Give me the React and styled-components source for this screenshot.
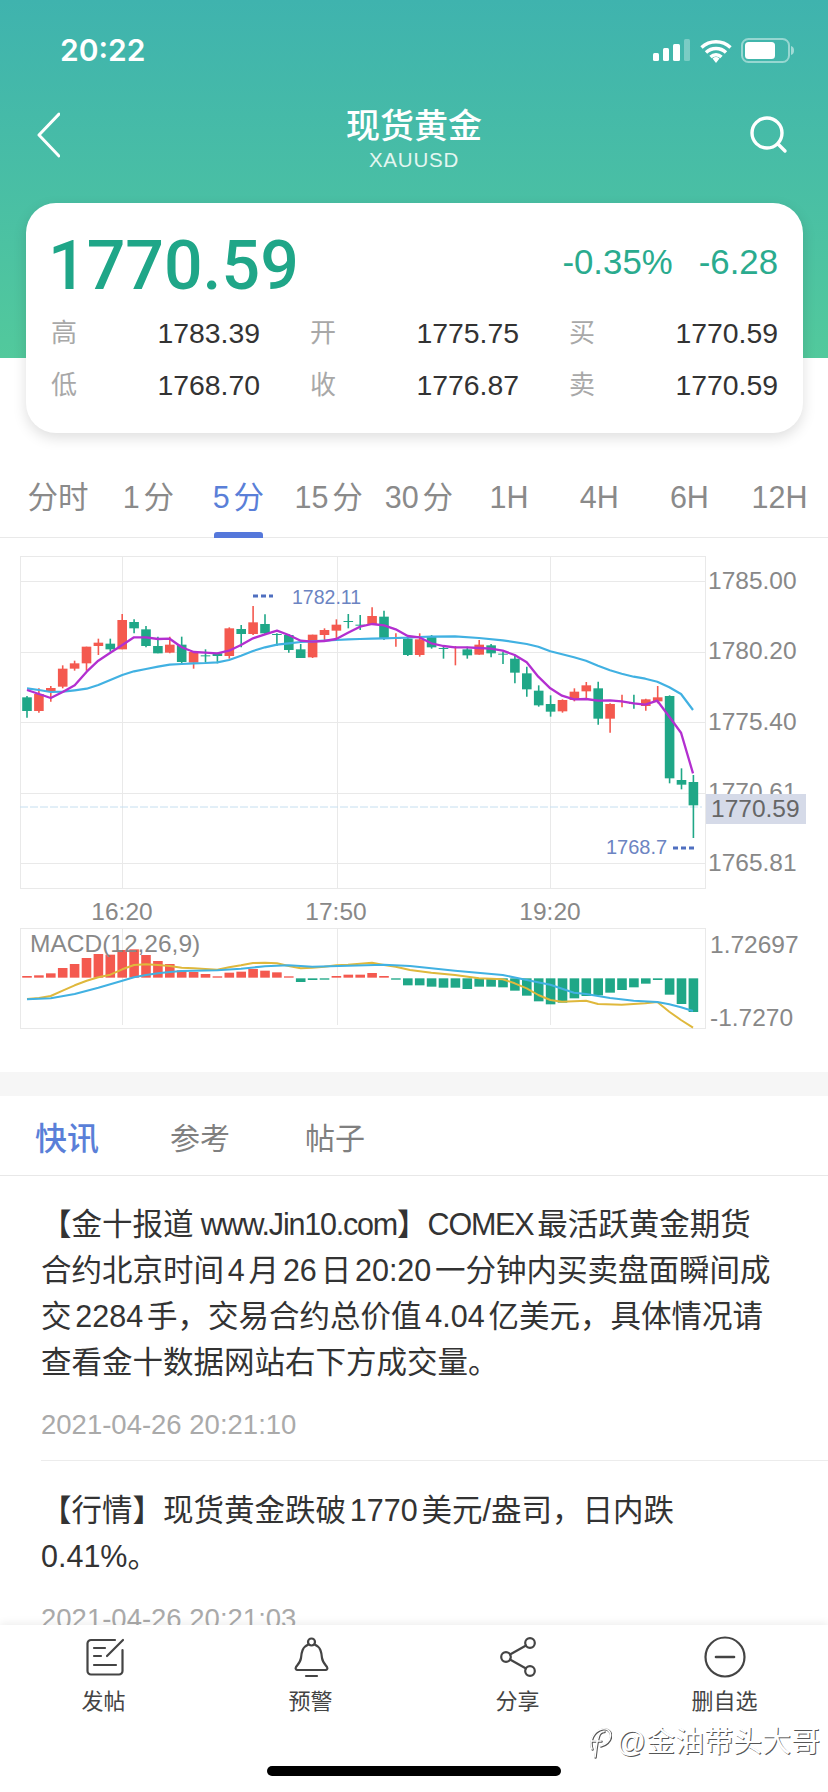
import React from "react";
import styled, { createGlobalStyle } from "styled-components";

const FONT = `"Liberation Sans", "Noto Sans CJK SC", sans-serif`;
const GREEN = "#1fa787";
const RED = "#f4594f";

const Global = createGlobalStyle`
  html, body { margin: 0; padding: 0; background: #fff; }
  body { font-family: ${FONT}; }
`;

const Page = styled.div`
  width: 828px;
  height: 1792px;
  display: flex;
  flex-direction: column;
  overflow: hidden;
  background: #fff;
`;
const Hero = styled.header`
  background: linear-gradient(180deg, #3fb3ae 0%, #52c99c 100%) no-repeat;
  background-size: 100% 358px;
`;
const StatusBar = styled.div`
  height: 100px;
  display: flex;
  align-items: center;
  justify-content: space-between;
  padding: 0 34px 0 60px;
`;
const Clock = styled.span`
  font-family: Inter, ${FONT};
  font-size: 30px;
  font-weight: 600;
  color: #fff;
`;
const NavBar = styled.nav`
  height: 103px;
  display: grid;
  grid-template-columns: 1fr auto 1fr;
  align-items: start;
  padding-top: 4px;
  box-sizing: border-box;
`;
const BackIcon = styled.svg`
  width: 30px;
  height: 50px;
  margin: 6px 0 0 30px;
`;
const SearchIcon = styled.svg`
  width: 44px;
  height: 44px;
  margin: 7px 39px 0 0;
  justify-self: end;
`;
const TitleBlock = styled.div`
  text-align: center;
  color: #fff;
`;
const Title = styled.div`
  font-family: "Noto Sans CJK SC", sans-serif;
  font-size: 34px;
  font-weight: 500;
  line-height: 40px;
`;
const Subtitle = styled.div`
  font-size: 20.5px;
  line-height: 26px;
  margin-top: 3px;
  letter-spacing: 0.8px;
  color: #e4f6f1;
`;
const QuoteCard = styled.section`
  margin: 0 25px 0 26px;
  height: 230px;
  box-sizing: border-box;
  padding: 30px 25px 0;
  background: #fff;
  border-radius: 30px;
  box-shadow: 0 5px 14px rgba(0, 0, 0, 0.13);
`;
const PriceRow = styled.div`
  height: 74px;
  display: flex;
  justify-content: space-between;
  align-items: flex-start;
`;
const Price = styled.div`
  font-family: Roboto, ${FONT};
  font-size: 68px;
  font-weight: 500;
  line-height: 66px;
  color: #1fa688;
  margin-left: -3px;
`;
const Change = styled.div`
  display: flex;
  gap: 26px;
  font-size: 34.8px;
  line-height: 58px;
  color: #2aab8e;
`;
const Stats = styled.div`
  display: grid;
  grid-template-columns: repeat(3, 209px);
  column-gap: 50px;
`;
const Stat = styled.div`
  height: 52px;
  display: flex;
  align-items: center;
  justify-content: space-between;
`;
const StatLabel = styled.span`
  font-size: 26px;
  padding-bottom: 6px;
  color: #a8a8a8;
`;
const StatValue = styled.span`
  font-size: 28.4px;
  color: #333;
`;
const PeriodTabs = styled.div`
  margin-top: 30px;
  height: 75px;
  box-sizing: border-box;
  padding-left: 13px;
  display: flex;
  border-bottom: 1px solid #e9e9e9;
`;
const Period = styled.div`
  position: relative;
  width: 90.2px;
  flex: none;
  text-align: center;
  font-size: 30.5px;
  line-height: 68px;
  white-space: nowrap;
  text-autospace: normal;
  color: ${(p) => (p.$active ? "#5a7fd8" : "#8a8a8a")};
  &::after {
    content: "";
    display: ${(p) => (p.$active ? "block" : "none")};
    position: absolute;
    left: 21px;
    right: 21px;
    bottom: -1px;
    height: 6px;
    border-radius: 3px 3px 0 0;
    background: #5578db;
  }
`;
const ChartSvg = styled.svg`
  display: block;
  width: 828px;
  height: 534px;
  flex: none;
`;
const AxisText = styled.text`
  font-family: ${FONT};
  font-size: ${(p) => p.$size || 24.5}px;
  fill: ${(p) => p.$fill || "#888"};
  dominant-baseline: central;
  text-anchor: ${(p) => p.$anchor || "start"};
`;
const Band = styled.div`
  height: 24px;
  flex: none;
  background: #f6f6f6;
`;
const NewsTabs = styled.div`
  height: 80px;
  flex: none;
  box-sizing: border-box;
  display: flex;
  align-items: center;
  padding-left: 35px;
  gap: 75px;
  border-bottom: 1px solid #e8e8e8;
`;
const NewsTab = styled.span`
  font-size: ${(p) => (p.$active ? 32 : 30)}px;
  margin-right: ${(p) => (p.$active ? -4 : 0)}px;
  font-weight: ${(p) => (p.$active ? 500 : 400)};
  color: ${(p) => (p.$active ? "#5a7fd8" : "#808080")};
  font-family: "Noto Sans CJK SC", sans-serif;
`;
const NewsList = styled.div`
  flex: 1;
  min-height: 0;
  overflow: hidden;
`;
const NewsItem = styled.article`
  margin-left: 41px;
  padding: ${(p) => (p.$first ? "25px" : "26px")} 0 20px;
  border-bottom: 1px solid #ececec;
`;
const NewsText = styled.p`
  margin: 0;
  font-size: 30.5px;
  line-height: 46px;
  color: #333;
  text-autospace: normal;
  white-space: nowrap;
`;
const LatinRun = styled.span`
  letter-spacing: -1.2px;
`;
const NewsDate = styled.div`
  margin-top: 25px;
  font-size: 27.5px;
  line-height: 30px;
  color: #aaa;
`;
const BottomBar = styled.footer`
  position: relative;
  height: 167px;
  flex: none;
  box-sizing: border-box;
  padding-top: 10px;
  display: flex;
  flex-direction: column;
  background: #fff;
  box-shadow: 0 -2px 8px rgba(0, 0, 0, 0.07);
`;
const Actions = styled.div`
  display: grid;
  grid-template-columns: repeat(4, 207px);
`;
const Action = styled.div`
  display: flex;
  flex-direction: column;
  align-items: center;
  gap: 8px;
`;
const ActionLabel = styled.span`
  font-size: 22px;
  line-height: 30px;
  color: #444;
`;
const HomeIndicator = styled.div`
  width: 294px;
  height: 10px;
  border-radius: 5px;
  background: #000;
  margin: auto auto 16px;
`;
const Watermark = styled.div`
  position: absolute;
  right: 8px;
  top: 99px;
  display: flex;
  align-items: center;
  gap: 5px;
  font-size: 29px;
  line-height: 36px;
  color: #fff;
  text-shadow: 1px 1px 0 #555;
`;

// reference coordinates measured on 3x crops: [x, wickTop, wickBottom, bodyTop, bodyBottom, up]
const c2 = (i) => 81 + 35.7 * i;
const candles = [
  [0,468,533,472,513,0],[1,445,518,462,513,1],[2,438,485,444,455,1],[3,376,445,386,440,1],
  [4,362,392,370,386,1],[5,320,392,320,370,1],[6,296,345,308,318,1],[7,296,335,311,328,0],
  [8,222,328,240,328,1],[9,238,280,246,265,0],[10,258,322,268,318,0],[11,290,340,318,340,0],
  [12,290,340,314,338,1],[13,290,370,314,366,0],[14,334,386,336,368,1],[15,328,368,346,348,0],
  [16,338,370,340,348,0],[17,262,356,265,348,1],[18,255,322,267,282,0],[19,198,285,247,282,1],
  [20,223,285,252,280,0],[21,280,318,282,284,0],[22,282,338,285,330,0],[23,312,354,328,354,0],
  [24,284,354,284,352,1],[25,265,300,270,285,1],[26,238,295,254,272,1],[27,222,265,243,245,0],
  [28,225,270,254,256,0],[29,202,255,228,255,1],[30,212,300,230,296,0],[31,280,320,294,296,1],
  [32,292,348,296,345,0],[33,280,350,298,345,1],[34,285,326,290,322,0],[35,318,356,324,326,0],
  [36,318,376,321,323,1],[37,320,356,328,346,0],[38,300,344,314,344,1],[39,312,352,316,340,0],
  [40,335,372,341,343,0],[41,345,430,356,398,0],[42,380,470,400,448,0],[43,436,500,452,496,0],
  [44,466,530,492,515,0],[45,478,518,480,514,1],[46,445,484,455,480,1],[47,426,474,436,454,1],
  [48,425,554,445,536,0],[49,490,578,492,536,1],[50,464,502,483,485,1],[51,464,506,489,491,0],
  [52,476,512,478,498,1],[53,438,490,472,484,1],[54,466,730,468,715,0],[55,685,748,720,734,0],
  [56,705,894,726,796,0],
];
const macdBars = [
  1308,1306,1300,1284,1272,1254,1242,1244,1230,1228,1245,1263,1272,1291,1296,1302,1309,1298,1295,1287,1292,1297,1309,
  1326,1320,1319,1308,1304,1304,1299,1308,1319,1336,1336,
  1340,1343,1343,1347,1340,1340,1342,1352,1367,1384,1393,1388,1375,1368,1366,1358,1350,1342,1331,1320,1364,1392,1416,
];
const z3 = (x) => x + 1230;
const purple = [[81,450],[117,462],[152,474],[188,456],[224,436],[260,395],[295,362],[331,338],[367,315],[402,292],[438,292],[474,297],[509,296],[545,322],[581,336],[616,338],[652,340],[687,332],[723,315],[759,295],[795,283],[831,272],[866,285],[902,302],[937,305],[973,303],[1009,297],[1044,278],[1080,260],[1116,252],[1152,256],[1187,268],[1223,288],[1258,292],[z3(64),310],[z3(100),318],[z3(135),322],[z3(171),322],[z3(207),324],[z3(242),326],[z3(278),332],[z3(314),345],[z3(350),367],[z3(385),410],[z3(421),445],[z3(456),467],[z3(492),478],[z3(528),477],[z3(564),482],[z3(600),481],[z3(635),484],[z3(671),490],[z3(706),494],[z3(742),482],[z3(778),530],[z3(813),578],[z3(849),700]];
const blue = [[81,445],[117,450],[152,456],[188,455],[224,451],[260,446],[295,435],[331,420],[367,405],[402,394],[438,387],[474,380],[509,374],[545,372],[581,370],[616,369],[652,367],[687,360],[723,347],[759,333],[795,322],[831,314],[866,310],[902,306],[937,304],[973,302],[1009,300],[1044,298],[1080,297],[1116,296],[1152,295],[1187,294],[1223,293],[1258,291],[z3(64),290],[z3(135),289],[z3(207),294],[z3(278),301],[z3(350),312],[z3(385),320],[z3(421),334],[z3(492),352],[z3(528),362],[z3(564),377],[z3(600),391],[z3(635),401],[z3(671),410],[z3(706),416],[z3(742),425],[z3(778),442],[z3(813),462],[z3(849),510]];
const macdYellow = [[81,1377],[117,1374],[152,1368],[188,1352],[224,1336],[260,1322],[295,1312],[331,1304],[367,1288],[402,1275],[438,1273],[474,1275],[509,1278],[545,1283],[581,1285],[616,1287],[652,1289],[687,1282],[723,1276],[759,1269],[795,1268],[831,1270],[866,1278],[902,1285],[937,1283],[973,1280],[1009,1276],[1044,1274],[1080,1271],[1116,1268],[1152,1275],[1187,1280],[z3(0),1290],[z3(64),1298],[z3(135),1305],[z3(207),1315],[z3(278),1318],[z3(314),1330],[z3(350),1345],[z3(385),1365],[z3(421),1380],[z3(456),1385],[z3(528),1382],[z3(564),1392],[z3(635),1394],[z3(706),1390],[z3(742),1386],[z3(778),1415],[z3(813),1440],[z3(849),1463]];
const macdBlue = [[81,1378],[152,1375],[224,1362],[295,1343],[367,1322],[402,1312],[438,1305],[474,1300],[509,1296],[545,1293],[652,1291],[723,1286],[795,1279],[866,1276],[937,1280],[1044,1277],[1152,1274],[z3(0),1278],[z3(135),1292],[z3(278),1305],[z3(350),1320],[z3(421),1334],[z3(492),1358],[z3(528),1362],[z3(600),1374],[z3(671),1382],[z3(742),1386],[z3(778),1393],[z3(813),1402],[z3(849),1413]];

const X = (z) => z / 3;
const Y = (z) => 540 + z / 3;
const pts = (arr) => arr.map(([x, y]) => `${X(x).toFixed(1)},${Y(y).toFixed(1)}`).join(" ");

const GRID = "#e9e9e9";

function Chart() {
  return (
    <ChartSvg viewBox="0 538 828 534">
      <g stroke={GRID} strokeWidth="1" fill="none">
        <rect x="20.5" y="556.5" width="685" height="332" />
        {[581, 652, 722, 793, 863].map((y) => (
          <line key={y} x1="20" x2="705" y1={y + 0.5} y2={y + 0.5} />
        ))}
        {[122, 337, 550].map((x) => (
          <line key={x} x1={x + 0.5} x2={x + 0.5} y1="557" y2="888" />
        ))}
        <rect x="20.5" y="928.5" width="685" height="100" />
        {[122, 337, 550].map((x) => (
          <line key={x} x1={x + 0.5} x2={x + 0.5} y1="929" y2="1025" />
        ))}
      </g>
      <line x1="20" x2="702" y1="807" y2="807" stroke="#c6dff0" strokeWidth="1" strokeDasharray="8 2" />
      {candles.map(([i, wt, wb, bt, bb, up]) => {
        const x = X(c2(i));
        const col = up ? RED : GREEN;
        return (
          <g key={i}>
            <line x1={x} x2={x} y1={Y(wt)} y2={Y(wb)} stroke={col} strokeWidth="1.6" />
            <rect x={x - 4.8} y={Y(bt)} width="9.6" height={Math.max((bb - bt) / 3, 1)} fill={col} />
          </g>
        );
      })}
      <polyline points={pts(blue)} fill="none" stroke="#41b1e2" strokeWidth="2.2" strokeLinejoin="round" />
      <polyline points={pts(purple)} fill="none" stroke="#b32fd0" strokeWidth="2.3" strokeLinejoin="round" />
      <line x1="253" x2="273" y1="596" y2="596" stroke="#4f6fc0" strokeWidth="3" strokeDasharray="5 3" />
      <AxisText x="292" y="597" $size={19.5} $fill="#6c84c2">1782.11</AxisText>
      <AxisText x="606" y="847" $size={20} $fill="#6c84c2">1768.7</AxisText>
      <line x1="673" x2="694" y1="848" y2="848" stroke="#4f6fc0" strokeWidth="3" strokeDasharray="5 3" />
      {[["1785.00", 580], ["1780.20", 650], ["1775.40", 721], ["1770.61", 791], ["1765.81", 862]].map(([t, y]) => (
        <AxisText key={t} x="708" y={y}>{t}</AxisText>
      ))}
      <rect x="706" y="794" width="100" height="30" fill="#d5dae8" />
      <AxisText x="711" y="808" $fill="#666">1770.59</AxisText>
      {[["16:20", 122], ["17:50", 336], ["19:20", 550]].map(([t, x]) => (
        <AxisText key={t} x={x} y="911" $anchor="middle">{t}</AxisText>
      ))}
      {macdBars.map((top, i) => {
        const x = X(c2(i));
        const up = top < 1313;
        return up ? (
          <rect key={i} x={x - 4.8} y={Y(top)} width="9.6" height={(1313 - top) / 3} fill={RED} />
        ) : (
          <rect key={i} x={x - 4.8} y={Y(1315)} width="9.6" height={(top - 1315) / 3} fill={GREEN} />
        );
      })}
      <polyline points={pts(macdYellow)} fill="none" stroke="#dfb83c" strokeWidth="2" strokeLinejoin="round" />
      <polyline points={pts(macdBlue)} fill="none" stroke="#41b1e2" strokeWidth="2.1" strokeLinejoin="round" />
      <AxisText x="30" y="943">MACD(12,26,9)</AxisText>
      <AxisText x="710" y="944">1.72697</AxisText>
      <AxisText x="710" y="1017">-1.7270</AxisText>
    </ChartSvg>
  );
}

const stats = [
  ["高", "1783.39"], ["开", "1775.75"], ["买", "1770.59"],
  ["低", "1768.70"], ["收", "1776.87"], ["卖", "1770.59"],
];
const periods = ["分时", "1分", "5分", "15分", "30分", "1H", "4H", "6H", "12H"];

const iconStroke = { fill: "none", stroke: "#444", strokeWidth: 2.2, strokeLinecap: "round", strokeLinejoin: "round" };

const PostIcon = () => (
  <svg width="44" height="44" viewBox="0 0 44 44" {...iconStroke}>
    <path d="M33 5H9a3.500 3.500 0 0 0-3.500 3.500V36A3.500 3.500 0 0 0 9 39.500h28a3.500 3.500 0 0 0 3.500-3.500V15" />
    <path d="M41 5 25 21M12 13h11M12 21h7M12 30h22" />
  </svg>
);
const BellIcon = () => (
  <svg width="44" height="44" viewBox="0 0 44 44" {...iconStroke}>
    <circle cx="22.500" cy="7" r="3.500" />
    <path d="M19.500 9.500C13 12 12.500 18 12 23c-.5 4-3 6.500-5 9-1 1.500 0 3 1.500 3h28c1.500 0 2.500-1.500 1.500-3-2-2.500-4.500-5-5-9-.5-5-1-11-7.500-13.500" />
    <path d="M17 41h11" />
  </svg>
);
const ShareIcon = () => (
  <svg width="44" height="44" viewBox="0 0 44 44" {...iconStroke}>
    <circle cx="34" cy="8" r="4.800" />
    <circle cx="34" cy="36" r="4.800" />
    <circle cx="10" cy="22" r="4.800" />
    <path d="M30 10.500 14 19.500M30 33.500 14 24.500" />
  </svg>
);
const MinusIcon = () => (
  <svg width="44" height="44" viewBox="0 0 44 44" {...iconStroke}>
    <circle cx="22" cy="22" r="19.500" />
    <path d="M13 22h18" strokeWidth="2.600" />
  </svg>
);
const logoPaths = "M6 24C3 16 7 6 16 4c5-1 9 2 8.500 7-.5 5-5 9-10 10 M9 32c1-9 1.500-15 3.500-21 1-3 3-4.500 5.500-4.500 M5 16h10";

export default function App() {
  return (
    <Page>
      <Global />
      <Hero>
        <StatusBar>
          <Clock>20:22</Clock>
          <svg width="141" height="26" viewBox="653 36 141 26">
            <g fill="#fff">
              <rect x="653" y="52" width="6" height="8" rx="1.500" />
              <rect x="663" y="47" width="6" height="13" rx="1.500" />
              <rect x="673" y="43" width="7" height="17" rx="1.500" />
              <rect x="684" y="38" width="6" height="22" rx="1.500" opacity="0.3" />
            </g>
            <path d="M701.500 46.500a21 21 0 0 1 29 0M706 51.500a14.500 14.500 0 0 1 20 0M710.500 56a8 8 0 0 1 11 0" fill="none" stroke="#fff" strokeWidth="3.400" />
            <path d="M712.500 57.500a5.500 5.500 0 0 1 7 0L716 62z" fill="#fff" />
            <rect x="742" y="38" width="47" height="23" rx="6.500" fill="none" stroke="#fff" strokeOpacity="0.45" strokeWidth="2" />
            <rect x="745" y="41" width="30" height="17" rx="3.500" fill="#fff" />
            <path d="M791 45c2.500.6 3 2.600 3 4.500s-.5 3.900-3 4.500z" fill="#fff" fillOpacity="0.5" />
          </svg>
        </StatusBar>
        <NavBar>
          <BackIcon viewBox="30 110 30 50">
            <path d="M59 114 39 135l20 21" fill="none" stroke="#fff" strokeWidth="3" strokeLinecap="round" strokeLinejoin="round" />
          </BackIcon>
          <TitleBlock>
            <Title>现货黄金</Title>
            <Subtitle>XAUUSD</Subtitle>
          </TitleBlock>
          <SearchIcon viewBox="745 111 44 44">
            <circle cx="767" cy="133" r="15" fill="none" stroke="#fff" strokeWidth="3.400" />
            <path d="M778 144l7 7" fill="none" stroke="#fff" strokeWidth="3.400" strokeLinecap="round" />
          </SearchIcon>
        </NavBar>
        <QuoteCard>
          <PriceRow>
            <Price>1770.59</Price>
            <Change>
              <span>-0.35%</span>
              <span>-6.28</span>
            </Change>
          </PriceRow>
          <Stats>
            {stats.map(([l, v]) => (
              <Stat key={l}>
                <StatLabel>{l}</StatLabel>
                <StatValue>{v}</StatValue>
              </Stat>
            ))}
          </Stats>
        </QuoteCard>
      </Hero>
      <PeriodTabs>
        {periods.map((p) => (
          <Period key={p} $active={p === "5分"}>{p}</Period>
        ))}
      </PeriodTabs>
      <Chart />
      <Band />
      <NewsTabs>
        <NewsTab $active>快讯</NewsTab>
        <NewsTab>参考</NewsTab>
        <NewsTab>帖子</NewsTab>
      </NewsTabs>
      <NewsList>
        <NewsItem $first>
          <NewsText>
            【金十报道<LatinRun> www.Jin10.com</LatinRun>】<LatinRun>COMEX</LatinRun>最活跃黄金期货<br />
            合约北京时间4月26日20:20一分钟内买卖盘面瞬间成<br />
            交2284手，交易合约总价值4.04亿美元，具体情况请<br />
            查看金十数据网站右下方成交量。
          </NewsText>
          <NewsDate>2021-04-26 20:21:10</NewsDate>
        </NewsItem>
        <NewsItem>
          <NewsText>
            【行情】现货黄金跌破1770美元/盎司，日内跌<br />
            0.41%。
          </NewsText>
          <NewsDate>2021-04-26 20:21:03</NewsDate>
        </NewsItem>
      </NewsList>
      <BottomBar>
        <Actions>
          <Action><PostIcon /><ActionLabel>发帖</ActionLabel></Action>
          <Action><BellIcon /><ActionLabel>预警</ActionLabel></Action>
          <Action><ShareIcon /><ActionLabel>分享</ActionLabel></Action>
          <Action><MinusIcon /><ActionLabel>删自选</ActionLabel></Action>
        </Actions>
        <Watermark>
          <svg width="26" height="34" viewBox="0 0 26 34" fill="none" strokeLinecap="round">
            <path d={logoPaths} stroke="#555" strokeWidth="2.400" transform="translate(.6 .6)" />
            <path d={logoPaths} stroke="#fff" strokeWidth="1.600" />
          </svg>
          <span>@金油带头大哥</span>
        </Watermark>
        <HomeIndicator />
      </BottomBar>
    </Page>
  );
}
